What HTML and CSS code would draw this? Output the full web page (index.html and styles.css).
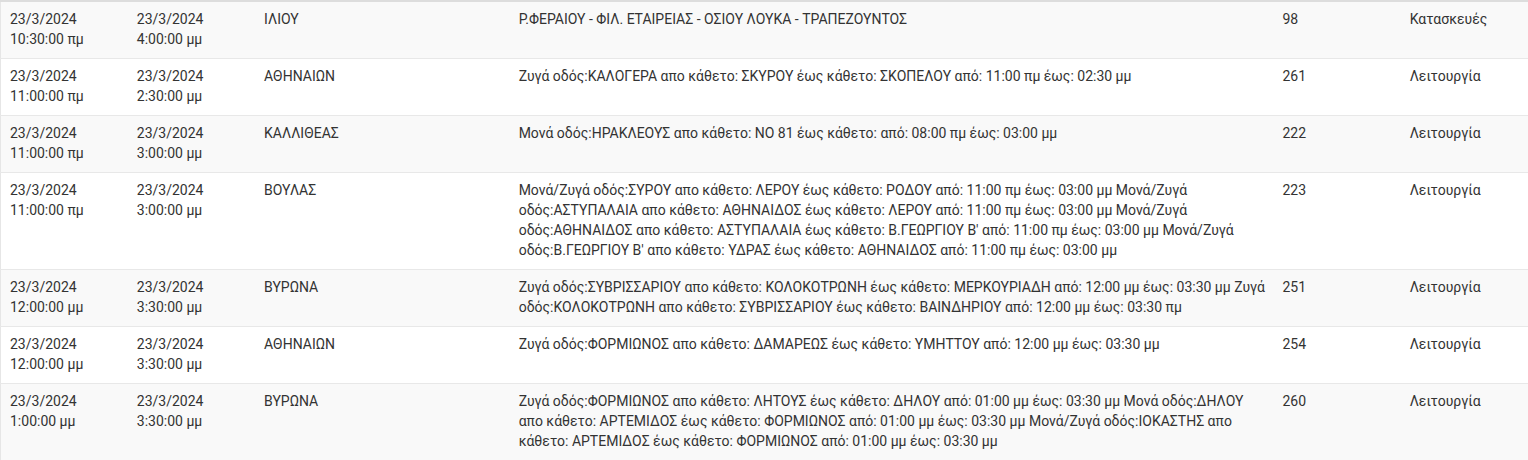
FILE: index.html
```html
<!DOCTYPE html>
<html lang="el">
<head>
<meta charset="utf-8">
<link rel="stylesheet" href="styles.css">
</head>
<body>
<table class="grid">
<colgroup>
<col class="c-s"><col class="c-s"><col class="c-m"><col class="c-l"><col class="c-s"><col class="c-s">
</colgroup>
<tbody>
<tr><td>23/3/2024<br>10:30:00 πμ</td><td>23/3/2024<br>4:00:00 μμ</td><td>ΙΛΙΟΥ</td><td>Ρ.ΦΕΡΑΙΟΥ - ΦΙΛ. ΕΤΑΙΡΕΙΑΣ - ΟΣΙΟΥ ΛΟΥΚΑ - ΤΡΑΠΕΖΟΥΝΤΟΣ</td><td>98</td><td>Κατασκευές</td></tr>
<tr><td>23/3/2024<br>11:00:00 πμ</td><td>23/3/2024<br>2:30:00 μμ</td><td>ΑΘΗΝΑΙΩΝ</td><td>Ζυγά οδός:ΚΑΛΟΓΕΡΑ απο κάθετο: ΣΚΥΡΟΥ έως κάθετο: ΣΚΟΠΕΛΟΥ από: 11:00 πμ έως: 02:30 μμ</td><td>261</td><td>Λειτουργία</td></tr>
<tr><td>23/3/2024<br>11:00:00 πμ</td><td>23/3/2024<br>3:00:00 μμ</td><td>ΚΑΛΛΙΘΕΑΣ</td><td>Μονά οδός:ΗΡΑΚΛΕΟΥΣ απο κάθετο: ΝΟ 81 έως κάθετο: από: 08:00 πμ έως: 03:00 μμ</td><td>222</td><td>Λειτουργία</td></tr>
<tr><td>23/3/2024<br>11:00:00 πμ</td><td>23/3/2024<br>3:00:00 μμ</td><td>ΒΟΥΛΑΣ</td><td>Μονά/Ζυγά οδός:ΣΥΡΟΥ απο κάθετο: ΛΕΡΟΥ έως κάθετο: ΡΟΔΟΥ από: 11:00 πμ έως: 03:00 μμ Μονά/Ζυγά οδός:ΑΣΤΥΠΑΛΑΙΑ απο κάθετο: ΑΘΗΝΑΙΔΟΣ έως κάθετο: ΛΕΡΟΥ από: 11:00 πμ έως: 03:00 μμ Μονά/Ζυγά οδός:ΑΘΗΝΑΙΔΟΣ απο κάθετο: ΑΣΤΥΠΑΛΑΙΑ έως κάθετο: Β.ΓΕΩΡΓΙΟΥ Β' από: 11:00 πμ έως: 03:00 μμ Μονά/Ζυγά οδός:Β.ΓΕΩΡΓΙΟΥ Β' απο κάθετο: ΥΔΡΑΣ έως κάθετο: ΑΘΗΝΑΙΔΟΣ από: 11:00 πμ έως: 03:00 μμ</td><td>223</td><td>Λειτουργία</td></tr>
<tr><td>23/3/2024<br>12:00:00 μμ</td><td>23/3/2024<br>3:30:00 μμ</td><td>ΒΥΡΩΝΑ</td><td>Ζυγά οδός:ΣΥΒΡΙΣΣΑΡΙΟΥ απο κάθετο: ΚΟΛΟΚΟΤΡΩΝΗ έως κάθετο: ΜΕΡΚΟΥΡΙΑΔΗ από: 12:00 μμ έως: 03:30 μμ Ζυγά οδός:ΚΟΛΟΚΟΤΡΩΝΗ απο κάθετο: ΣΥΒΡΙΣΣΑΡΙΟΥ έως κάθετο: ΒΑΙΝΔΗΡΙΟΥ από: 12:00 μμ έως: 03:30 πμ</td><td>251</td><td>Λειτουργία</td></tr>
<tr><td>23/3/2024<br>12:00:00 μμ</td><td>23/3/2024<br>3:30:00 μμ</td><td>ΑΘΗΝΑΙΩΝ</td><td>Ζυγά οδός:ΦΟΡΜΙΩΝΟΣ απο κάθετο: ΔΑΜΑΡΕΩΣ έως κάθετο: ΥΜΗΤΤΟΥ από: 12:00 μμ έως: 03:30 μμ</td><td>254</td><td>Λειτουργία</td></tr>
<tr><td>23/3/2024<br>1:00:00 μμ</td><td>23/3/2024<br>3:30:00 μμ</td><td>ΒΥΡΩΝΑ</td><td>Ζυγά οδός:ΦΟΡΜΙΩΝΟΣ απο κάθετο: ΛΗΤΟΥΣ έως κάθετο: ΔΗΛΟΥ από: 01:00 μμ έως: 03:30 μμ Μονά οδός:ΔΗΛΟΥ απο κάθετο: ΑΡΤΕΜΙΔΟΣ έως κάθετο: ΦΟΡΜΙΩΝΟΣ από: 01:00 μμ έως: 03:30 μμ Μονά/Ζυγά οδός:ΙΟΚΑΣΤΗΣ απο κάθετο: ΑΡΤΕΜΙΔΟΣ έως κάθετο: ΦΟΡΜΙΩΝΟΣ από: 01:00 μμ έως: 03:30 μμ</td><td>260</td><td>Λειτουργία</td></tr>
</tbody>
</table>
</body>
</html>
```

FILE: styles.css
```css
html, body {
  margin: 0;
  padding: 0;
  background: #ffffff;
}

.grid {
  width: 1528px;
  border-collapse: collapse;
  table-layout: fixed;
  font-family: Roboto, "Noto Sans", sans-serif;
  font-size: 14px;
  line-height: 20px;
  color: #333333;
  border-top: 2px solid #dddddd;
  border-left: 1px solid #e6e6e6;
}

.c-s { width: 8.3333%; }
.c-m { width: 16.6667%; }
.c-l { width: 50%; }

.grid td {
  vertical-align: top;
  padding: 7px 6px 9px 9px;
  border-bottom: 1px solid #e8e8e8;
  overflow-wrap: break-word;
}

.grid tr:nth-child(odd) td {
  background: #f9f9f9;
}

.grid tr:nth-child(even) td {
  background: #ffffff;
}
```
